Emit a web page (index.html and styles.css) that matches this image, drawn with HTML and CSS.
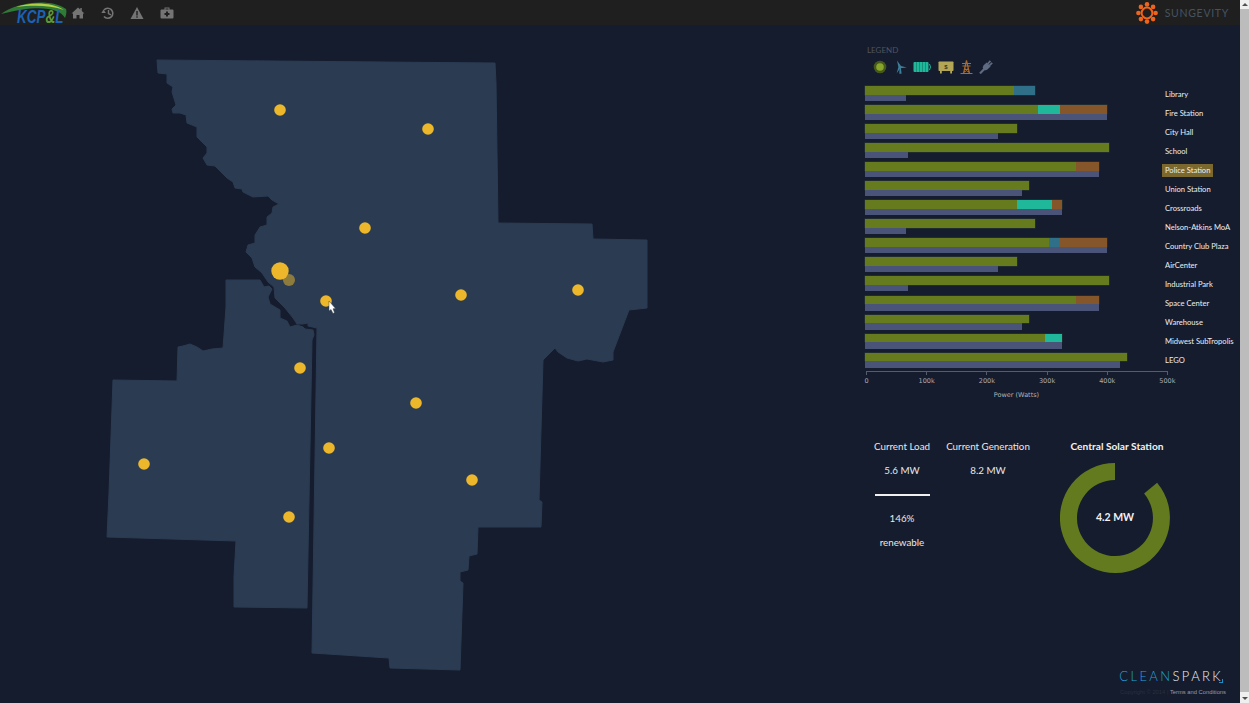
FILE: index.html
```html
<!DOCTYPE html>
<html lang="en">

<head>
    <meta charset="UTF-8">
    <meta name="viewport" content="width=device-width, initial-scale=1.0">
    <title>Microgrid Dashboard</title>
    <link rel="stylesheet" href="styles.css">
</head>

<body>
    <div class="app">
        <!-- top bar -->
        <header class="topbar">
            <svg class="kcpl" width="68" height="25" viewBox="0 0 68 25">
                <path d="M1 14 C14 3 50 -3 66 9 C67 12 66 15 65 18 C60 8 38 4 1 14 Z" fill="#2f7a36" />
                <path d="M16 7 C30 2 52 2 64 10 C50 5 32 5 16 7 Z" fill="#b5cf45" />
                <text transform="translate(17 23) scale(0.71 1)" class="kcpl-text">KCP<tspan fill="#5d9a35">&amp;</tspan>L</text>
            </svg>
            <nav class="topnav">
                <svg width="14" height="14" viewBox="0 0 14 14"><path d="M7 1.5 L0.5 7.5 L2 7.5 L2 12.5 L5.5 12.5 L5.5 9 L8.5 9 L8.5 12.5 L12 12.5 L12 7.5 L13.5 7.5 L10.8 5 L10.8 2 L9.3 2 L9.3 3.6 Z" fill="#747474" /></svg>
                <svg width="14" height="14" viewBox="0 0 14 14"><path d="M3 4 A5 5 0 1 1 3 10.5" fill="none" stroke="#747474" stroke-width="1.6" /><path d="M0.5 3.5 L5 3.5 L3 7 Z" fill="#747474" transform="rotate(180 2.7 5.2)" /><path d="M7.5 4 L7.5 7.5 L10 8.8" fill="none" stroke="#747474" stroke-width="1.4" /></svg>
                <svg width="14" height="14" viewBox="0 0 14 14"><path d="M7 1 L13.5 13 L0.5 13 Z" fill="#747474" /><rect x="6.3" y="5" width="1.4" height="4.5" fill="#1f1f1f" /><rect x="6.3" y="10.3" width="1.4" height="1.4" fill="#1f1f1f" /></svg>
                <svg width="14" height="14" viewBox="0 0 14 14"><path d="M1.5 3.5 L4.5 3.5 L4.5 1.5 L9.5 1.5 L9.5 3.5 L12.5 3.5 Q13.5 3.5 13.5 4.5 L13.5 11.5 Q13.5 12.5 12.5 12.5 L1.5 12.5 Q0.5 12.5 0.5 11.5 L0.5 4.5 Q0.5 3.5 1.5 3.5 Z M5.5 2.5 L5.5 3.5 L8.5 3.5 L8.5 2.5 Z" fill="#747474" fill-rule="evenodd" /><path d="M6 5.5 H8 V7 H9.5 V9 H8 V10.5 H6 V9 H4.5 V7 H6 Z" fill="#1f1f1f" /></svg>
            </nav>
            <div class="sungevity">
                <svg width="22" height="22" viewBox="0 0 22 22">
                    <circle cx="11" cy="11" r="5.4" fill="none" stroke="#ee641c" stroke-width="2" />
                    <g fill="#ee641c">
                        <circle cx="11" cy="2.4" r="2.3" />
                        <circle cx="17.1" cy="4.900" r="2.3" />
                        <circle cx="19.600" cy="11" r="2.3" />
                        <circle cx="17.100" cy="17.100" r="2.3" />
                        <circle cx="11" cy="19.600" r="2.3" />
                        <circle cx="4.900" cy="17.100" r="2.3" />
                        <circle cx="2.400" cy="11" r="2.3" />
                        <circle cx="4.900" cy="4.900" r="2.3" />
                    </g>
                </svg>
                <span class="sungevity-name">SUNGEVITY</span>
            </div>
        </header>

        <div class="content">
            <!-- map, drawn in page coordinates -->
            <div class="map">
                <svg width="865" height="678" viewBox="0 25 865 678">
                    <path class="county" d="M157 60 L495 63 L496 83 L498 223 L592 224 L593 239 L647 240 L647 308 L629 310 L613 352 L613 360 L603 362 L587 359 L578 361 L567 358 L558 352 L555 348 L543 360 L539 500 L542 502 L541 527 L478 527 L477 554 L469 556 L468 570 L460 572 L460 581 L463 583 L460 670 L390 668 L389 658 L312 653 L317 328 L308 326 L308 323 L303 324 L297 324 L293 318 L285 308 L275 298 L274 287 L268 282 L262 273 L255 267 L252 258 L246 252 L248 245 L255 243 L255 235 L260 227 L267 225 L267 217 L272 213 L273 207 L279 204 L272 200 L268 196 L253 197 L243 192 L242 189 L235 188 L233 182 L227 178 L219 170 L215 166 L207 165 L203 158 L207 153 L207 147 L197 137 L197 127 L187 123 L186 115 L180 113 L173 113 L172 109 L176 105 L172 92 L173 87 L167 83 L167 74 L158 73 Z" />
                    <path class="county" d="M226 280 L260 280 L264 287 L269 286 L272 289 L268 297 L270 304 L280 310 L280 318 L287 321 L290 327 L297 325 L303 327 L305 329 L313 330 L314 335 L312 340 L307 608 L234 607 L234 577 L236 541 L107 537 L109 493 L113 380 L177 381 L178 347 L183 346 L190 344 L197 347 L203 351 L212 349 L223 348 L224 335 L226 307 Z" />
                    <circle class="site" cx="280" cy="110" r="5.8" />
                    <circle class="site" cx="428" cy="129" r="5.8" />
                    <circle class="site" cx="365" cy="228" r="5.8" />
                    <circle class="site" cx="461" cy="295" r="5.8" />
                    <circle class="site" cx="578" cy="290" r="5.8" />
                    <circle class="site" cx="326" cy="301" r="5.8" />
                    <circle class="site" cx="300" cy="368" r="5.8" />
                    <circle class="site" cx="416" cy="403" r="5.8" />
                    <circle class="site" cx="329" cy="448" r="5.8" />
                    <circle class="site" cx="472" cy="480" r="5.8" />
                    <circle class="site" cx="144" cy="464" r="5.8" />
                    <circle class="site" cx="289" cy="517" r="5.8" />
                    <circle class="site-dim" cx="289" cy="280" r="6" />
                    <circle class="site" cx="280" cy="271" r="8.7" />
                    <path d="M329 301 L329 311 L331 309.500 L333 313.500 L334.500 312.500 L333 308.800 L335.500 308.500 Z" fill="#fff" stroke="#39404e" stroke-width="0.5" />
                </svg>
            </div>

            <aside class="side">
                <div class="legend-title">LEGEND</div>
                <div class="legend">
                    <svg width="14" height="14" viewBox="0 0 14 14"><circle cx="7" cy="7" r="6.300" fill="#47581c" /><circle cx="7" cy="7" r="3.800" fill="#86a52a" /></svg>
                    <svg width="14" height="14" viewBox="0 0 14 14"><path d="M4 0.500 L8 6 L13.800 7.500 L7.200 8.300 L3.600 13.500 L5.400 7 Z" fill="#3d7f98" /><path d="M6.500 8 L7.900 8 L8.600 13.800 L6.300 13.800 Z" fill="#3d7f98" /></svg>
                    <svg width="19" height="12" viewBox="0 0 19 12"><rect x="0.500" y="1" width="15" height="10" rx="1" fill="#20b89a" /><path d="M3.500 1 V11 M6.500 1 V11 M9.500 1 V11 M12.500 1 V11" stroke="#128068" stroke-width="0.700" /><path d="M16.500 3 Q18.500 6 16.500 9" fill="none" stroke="#20b89a" stroke-width="1" /></svg>
                    <svg width="16" height="13" viewBox="0 0 16 13"><rect x="0.500" y="0.500" width="15" height="9.500" rx="0.800" fill="#b3a757" /><rect x="2" y="10" width="1.800" height="2.500" fill="#b3a757" /><rect x="12.200" y="10" width="1.800" height="2.500" fill="#b3a757" /><text x="8" y="7.800" class="money-sign">$</text></svg>
                    <svg width="13" height="14" viewBox="0 0 13 14"><path d="M6.500 0.500 L3.500 13.500 M6.500 0.500 L9.500 13.500 M2 3.500 H11 M2.500 6 H10.500 M0.500 13.500 H12.500 M4.600 8.500 L8.800 12 M8.400 8.500 L4.200 12" fill="none" stroke="#a96a2b" stroke-width="1.200" /></svg>
                    <svg width="14" height="14" viewBox="0 0 14 14"><path d="M7.600 2.400 L11.600 6.400 L8.400 9.600 Q6.400 11 4.400 9.400 Q3 7.600 4.400 5.600 Z" fill="#5e6b82" /><path d="M8.600 4 L11.400 0.800 M10.200 5.600 L13.200 2.800" stroke="#5e6b82" stroke-width="1.800" /><path d="M5 9.200 L1 13.400" stroke="#5e6b82" stroke-width="2.200" /></svg>
                </div>

                <div class="chart">
                    <div class="row">
                        <div class="bars">
                            <div class="stack"><span class="seg solar" style="width:149px"></span><span class="seg wind" style="width:21px"></span></div>
                            <div class="load" style="width:41px"></div>
                        </div>
                        <div class="row-label">Library</div>
                    </div>
                    <div class="row">
                        <div class="bars">
                            <div class="stack"><span class="seg solar" style="width:173px"></span><span class="seg battery" style="width:22px"></span><span class="seg grid" style="width:47px"></span></div>
                            <div class="load" style="width:242px"></div>
                        </div>
                        <div class="row-label">Fire Station</div>
                    </div>
                    <div class="row">
                        <div class="bars">
                            <div class="stack"><span class="seg solar" style="width:152px"></span></div>
                            <div class="load" style="width:133px"></div>
                        </div>
                        <div class="row-label">City Hall</div>
                    </div>
                    <div class="row">
                        <div class="bars">
                            <div class="stack"><span class="seg solar" style="width:244px"></span></div>
                            <div class="load" style="width:43px"></div>
                        </div>
                        <div class="row-label">School</div>
                    </div>
                    <div class="row">
                        <div class="bars">
                            <div class="stack"><span class="seg solar" style="width:211px"></span><span class="seg grid" style="width:23px"></span></div>
                            <div class="load" style="width:234px"></div>
                        </div>
                        <div class="row-label active">Police Station</div>
                    </div>
                    <div class="row">
                        <div class="bars">
                            <div class="stack"><span class="seg solar" style="width:164px"></span></div>
                            <div class="load" style="width:157px"></div>
                        </div>
                        <div class="row-label">Union Station</div>
                    </div>
                    <div class="row">
                        <div class="bars">
                            <div class="stack"><span class="seg solar" style="width:152px"></span><span class="seg battery" style="width:35px"></span><span class="seg grid" style="width:10px"></span></div>
                            <div class="load" style="width:197px"></div>
                        </div>
                        <div class="row-label">Crossroads</div>
                    </div>
                    <div class="row">
                        <div class="bars">
                            <div class="stack"><span class="seg solar" style="width:170px"></span></div>
                            <div class="load" style="width:41px"></div>
                        </div>
                        <div class="row-label">Nelson-Atkins MoA</div>
                    </div>
                    <div class="row">
                        <div class="bars">
                            <div class="stack"><span class="seg solar" style="width:184px"></span><span class="seg wind" style="width:11px"></span><span class="seg grid" style="width:47px"></span></div>
                            <div class="load" style="width:242px"></div>
                        </div>
                        <div class="row-label">Country Club Plaza</div>
                    </div>
                    <div class="row">
                        <div class="bars">
                            <div class="stack"><span class="seg solar" style="width:152px"></span></div>
                            <div class="load" style="width:133px"></div>
                        </div>
                        <div class="row-label">AirCenter</div>
                    </div>
                    <div class="row">
                        <div class="bars">
                            <div class="stack"><span class="seg solar" style="width:244px"></span></div>
                            <div class="load" style="width:43px"></div>
                        </div>
                        <div class="row-label">Industrial Park</div>
                    </div>
                    <div class="row">
                        <div class="bars">
                            <div class="stack"><span class="seg solar" style="width:211px"></span><span class="seg grid" style="width:23px"></span></div>
                            <div class="load" style="width:234px"></div>
                        </div>
                        <div class="row-label">Space Center</div>
                    </div>
                    <div class="row">
                        <div class="bars">
                            <div class="stack"><span class="seg solar" style="width:164px"></span></div>
                            <div class="load" style="width:157px"></div>
                        </div>
                        <div class="row-label">Warehouse</div>
                    </div>
                    <div class="row">
                        <div class="bars">
                            <div class="stack"><span class="seg solar" style="width:180px"></span><span class="seg battery" style="width:17px"></span></div>
                            <div class="load" style="width:197px"></div>
                        </div>
                        <div class="row-label">Midwest SubTropolis</div>
                    </div>
                    <div class="row">
                        <div class="bars">
                            <div class="stack"><span class="seg solar" style="width:262px"></span></div>
                            <div class="load" style="width:255px"></div>
                        </div>
                        <div class="row-label">LEGO</div>
                    </div>
                </div>

                <div class="axis">
                    <div class="ticks">
                        <span class="tick"><i>0</i></span>
                        <span class="tick"><i>100k</i></span>
                        <span class="tick"><i>200k</i></span>
                        <span class="tick"><i>300k</i></span>
                        <span class="tick"><i>400k</i></span>
                        <span class="tick"><i>500k</i></span>
                    </div>
                    <div class="axis-title">Power (Watts)</div>
                </div>

                <div class="stats">
                    <div class="stat stat-load">
                        <p>Current Load</p>
                        <p>5.6 MW</p>
                        <div class="rule"></div>
                        <p>146%</p>
                        <p>renewable</p>
                    </div>
                    <div class="stat stat-gen">
                        <p>Current Generation</p>
                        <p>8.2 MW</p>
                    </div>
                    <div class="stat stat-station">
                        <p class="station-name">Central Solar Station</p>
                        <svg class="donut" width="110" height="110" viewBox="0 0 110 110">
                            <path d="M97.100 19.700 A55 55 0 1 1 55 0 L55 17 A38 38 0 1 0 84.100 30.600 Z" fill="#637a1e" />
                            <text x="55" y="58" class="donut-text">4.2 MW</text>
                        </svg>
                    </div>
                </div>

                <footer class="footer">
                    <div class="cleanspark"><span class="clean">CLEAN</span>SPARK<i class="spark-tick"></i></div>
                    <div class="legal"><span class="copy">Copyright © 2014 | </span>Terms and Conditions</div>
                </footer>
            </aside>
        </div>
    </div>

    <div class="scrollbar">
        <span class="arrow-up"></span>
        <div class="thumb"></div>
        <span class="arrow-down"></span>
    </div>
</body>

</html>
```

FILE: styles.css
```css
html,
body {
    height: 100%;
}

body {
    margin: 0;
    display: flex;
    height: 703px;
    overflow: hidden;
    background-color: #151c2e;
    font-family: "Lato", "Noto Sans", sans-serif;
    color: #e8e8e8;
}

p {
    margin: 0;
}

.app {
    flex: 1;
    display: flex;
    flex-direction: column;
    min-width: 0;
}

/* top bar */
.topbar {
    height: 25px;
    flex: none;
    display: flex;
    align-items: center;
    background-color: #1f1f1f;
}

.kcpl {
    flex: none;
}

.kcpl-text {
    font-family: "Liberation Sans", sans-serif;
    font-size: 19px;
    font-weight: bold;
    font-style: italic;
    fill: #1a62b8;
}

.topnav {
    display: flex;
    align-items: center;
    gap: 15.7px;
    margin-left: 3px;
}

.sungevity {
    margin-left: auto;
    margin-right: 11px;
    display: flex;
    align-items: center;
    gap: 7px;
}

.sungevity-name {
    font-size: 10.5px;
    letter-spacing: 0.7px;
    color: #46535f;
}

.content {
    flex: 1;
    display: flex;
    min-height: 0;
}

/* map */
.map {
    width: 865px;
    flex: none;
}

.map svg {
    display: block;
}

.county {
    fill: #2b3b52;
    stroke: #2b3b52;
    stroke-width: 1;
    stroke-linejoin: round;
}

.site {
    fill: #ecb72a;
}

.site-dim {
    fill: #8d7a3d;
}

/* right panel */
.side {
    flex: 1;
    display: flex;
    flex-direction: column;
    min-width: 0;
    padding-top: 21px;
}

.legend-title {
    font-size: 8px;
    line-height: 9px;
    color: #50535c;
    padding-left: 2px;
}

.legend {
    display: flex;
    align-items: center;
    height: 14px;
    gap: 6px;
    margin-top: 5px;
    padding-left: 8px;
}

.money-sign {
    font-family: "Liberation Sans", sans-serif;
    font-size: 6px;
    font-weight: bold;
    fill: #3a3520;
    text-anchor: middle;
}

.chart {
    margin-top: 10px;
}

.row {
    display: flex;
    align-items: center;
    height: 19.05px;
}

.bars {
    width: 297px;
    flex: none;
}

.stack {
    display: flex;
    width: fit-content;
    height: 8.5px;
    box-shadow: 0 0 0 0.5px #2b3a30;
}

.seg {
    display: block;
    height: 100%;
}

.solar {
    background-color: #667a1e;
}

.wind {
    background-color: #2f7088;
}

.battery {
    background-color: #20b89a;
}

.grid {
    background-color: #85562a;
}

.load {
    height: 6.5px;
    background-color: #4a5478;
}

.row-label {
    font-size: 7.6px;
    line-height: 13px;
    white-space: nowrap;
    color: #eeeeee;
    padding: 0 3px;
    margin-top: 1px;
}

.row-label.active {
    background-color: #7a682e;
}

/* axis */
.axis {
    margin-top: 1px;
    width: 303px;
}

.ticks {
    display: flex;
    justify-content: space-between;
    border-top: 1px solid #555c6b;
    margin-left: 1px;
    height: 3px;
}

.tick {
    position: relative;
    width: 1px;
    background-color: #555c6b;
}

.tick i {
    position: absolute;
    top: 5px;
    left: -15px;
    width: 31px;
    text-align: center;
    font-style: normal;
    font-family: "DejaVu Sans", sans-serif;
    font-size: 6.5px;
    line-height: 8px;
    color: #a8acb6;
}

.axis-title {
    margin-top: 16px;
    text-align: center;
    font-family: "DejaVu Sans", sans-serif;
    font-size: 6.5px;
    line-height: 9px;
    color: #b0b4bc;
}

/* numbers and donut */
.stats {
    display: flex;
    margin-top: 34px;
    text-align: center;
    font-size: 9.8px;
}

.stat p {
    line-height: 24.4px;
}

.stat-load {
    width: 74px;
}

.rule {
    width: 55px;
    height: 2px;
    margin: 11px auto 10px;
    background-color: #f0f0f0;
}

.stat-gen {
    width: 98px;
}

.stat-station {
    width: 160px;
}

.station-name {
    font-size: 10.2px;
    font-weight: bold;
    color: #f2f2f2;
}

.donut {
    display: block;
    margin: 5px 0 0 23px;
}

.donut-text {
    font-size: 10.5px;
    font-weight: bold;
    fill: #f2f2f2;
    text-anchor: middle;
}

/* footer */
.footer {
    margin-top: auto;
    padding-bottom: 6px;
    padding-right: 14px;
    text-align: right;
}

.cleanspark {
    position: relative;
    display: inline-block;
    margin-right: 3px;
    font-size: 13px;
    font-weight: 300;
    line-height: 16px;
    letter-spacing: 2.4px;
    color: #f0f2f4;
}

.clean {
    color: #22a0dc;
}

.spark-tick {
    position: absolute;
    right: 0;
    bottom: 1px;
    width: 3px;
    height: 3px;
    border-right: 1px solid #1a8fc8;
    border-bottom: 1px solid #1a8fc8;
}

.legal {
    font-family: "Liberation Sans", sans-serif;
    font-size: 5.8px;
    line-height: 10px;
    margin-top: 3px;
    color: #9a9ea8;
}

.copy {
    color: #2a3040;
}

/* window scrollbar */
.scrollbar {
    width: 9px;
    flex: none;
    display: flex;
    flex-direction: column;
    align-items: center;
    background-color: #efefef;
}

.arrow-up,
.arrow-down {
    flex: none;
    margin: 3px 0;
    border-left: 3px solid transparent;
    border-right: 3px solid transparent;
}

.arrow-up {
    border-bottom: 3px solid #505050;
}

.arrow-down {
    border-top: 3px solid #505050;
}

.thumb {
    flex: 1;
    width: 100%;
    margin: 0 0 2px;
    background-color: #bcbcbc;
}
```
